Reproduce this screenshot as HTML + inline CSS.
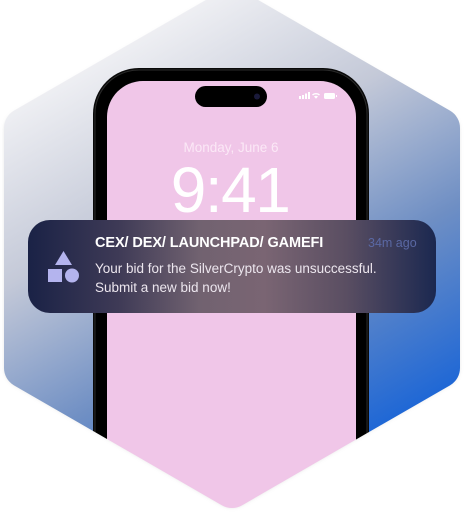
<!DOCTYPE html>
<html><head><meta charset="utf-8"><style>
html,body{margin:0;padding:0;background:#fff;}
body{width:464px;height:517px;overflow:hidden;position:relative;font-family:"Liberation Sans",sans-serif;}
svg{display:block}
</style></head><body>
<svg width="464" height="517" viewBox="0 0 464 517" style="position:absolute;left:0;top:0">
<defs>
<linearGradient id="hg" x1="150" y1="0" x2="400" y2="440" gradientUnits="userSpaceOnUse">
<stop offset="0" stop-color="#f6f6f8"/>
<stop offset="0.35" stop-color="#c4c9d8"/>
<stop offset="0.65" stop-color="#6f8fc4"/>
<stop offset="1" stop-color="#1462d8"/>
</linearGradient>
<mask id="hm" maskUnits="userSpaceOnUse" x="0" y="0" width="464" height="517">
<polygon points="232,8 440,128 440,368 232,488 24,368 24,128" fill="#fff" stroke="#fff" stroke-width="40" stroke-linejoin="round"/>
</mask>
<filter id="sh" x="-10%" y="-10%" width="120%" height="120%"><feGaussianBlur stdDeviation="2"/></filter>
</defs>
<polygon points="232,10 440,130 440,368 232,488 24,368 24,130" fill="#999" opacity="0.35" stroke="#999" stroke-width="38" stroke-linejoin="round" filter="url(#sh)"/>
<g mask="url(#hm)">
<rect x="0" y="0" width="464" height="517" fill="url(#hg)"/>
<rect x="93" y="68" width="276" height="500" rx="46" fill="#0a0a0a"/>
<rect x="95" y="70" width="272" height="500" rx="44" fill="#000" stroke="#2a2a2a" stroke-width="1"/>
<rect x="107" y="81" width="249" height="480" rx="36" fill="#f0c6e8"/>
</g>
<rect x="195" y="86" width="72" height="21" rx="10.5" fill="#000"/>
<circle cx="257" cy="96.5" r="3" fill="#1a1a3a"/>
<g fill="#fff">
<rect x="299" y="96" width="2" height="3"/><rect x="302" y="95" width="2" height="4"/><rect x="305" y="93.5" width="2" height="5.5"/><rect x="308" y="92" width="2" height="7"/>
<path d="M312 94.5 a6 6 0 0 1 8 0 l-1 1 a4.5 4.5 0 0 0 -6 0z M314 96.5 a3 3 0 0 1 4 0 l-2 2.3z"/>
<rect x="324" y="93" width="11" height="6" rx="1.5"/><rect x="336" y="95" width="1" height="2"/>
</g>
<text x="231" y="152" text-anchor="middle" font-family="Liberation Sans,sans-serif" font-size="13.5" fill="#fbe8f6">Monday, June 6</text>
<text x="230" y="212" text-anchor="middle" font-family="Liberation Sans,sans-serif" font-size="64" fill="#fff" letter-spacing="-1.5">9:41</text>
</svg>
<div style="position:absolute;left:28px;top:220px;width:408px;height:93px;border-radius:22px;background:linear-gradient(90deg,#1a2246 0%,#3e3a56 22%,#716270 42%,#7a6573 58%,#5a4e62 78%,#1b2850 100%);"></div>
<svg width="40" height="40" viewBox="0 0 40 40" style="position:absolute;left:44px;top:248px">
<polygon points="19.5,3 28,17 11,17" fill="#b4b4ee"/>
<rect x="4" y="21" width="14" height="13" fill="#b4b4ee"/>
<circle cx="28" cy="27.5" r="7" fill="#b4b4ee"/>
</svg>
<div style="position:absolute;left:95px;top:235px;font-size:14.5px;font-weight:bold;color:#fff;white-space:nowrap;letter-spacing:-0.1px;">CEX/ DEX/ LAUNCHPAD/ GAMEFI</div>
<div style="position:absolute;left:368px;top:236px;font-size:12.5px;color:#5a68a4;white-space:nowrap;">34m ago</div>
<div style="position:absolute;left:95px;top:259px;font-size:13.5px;line-height:19px;color:#ece6ee;white-space:nowrap;">Your bid for the SilverCrypto was unsuccessful.<br>Submit a new bid now!</div>
</body></html>
